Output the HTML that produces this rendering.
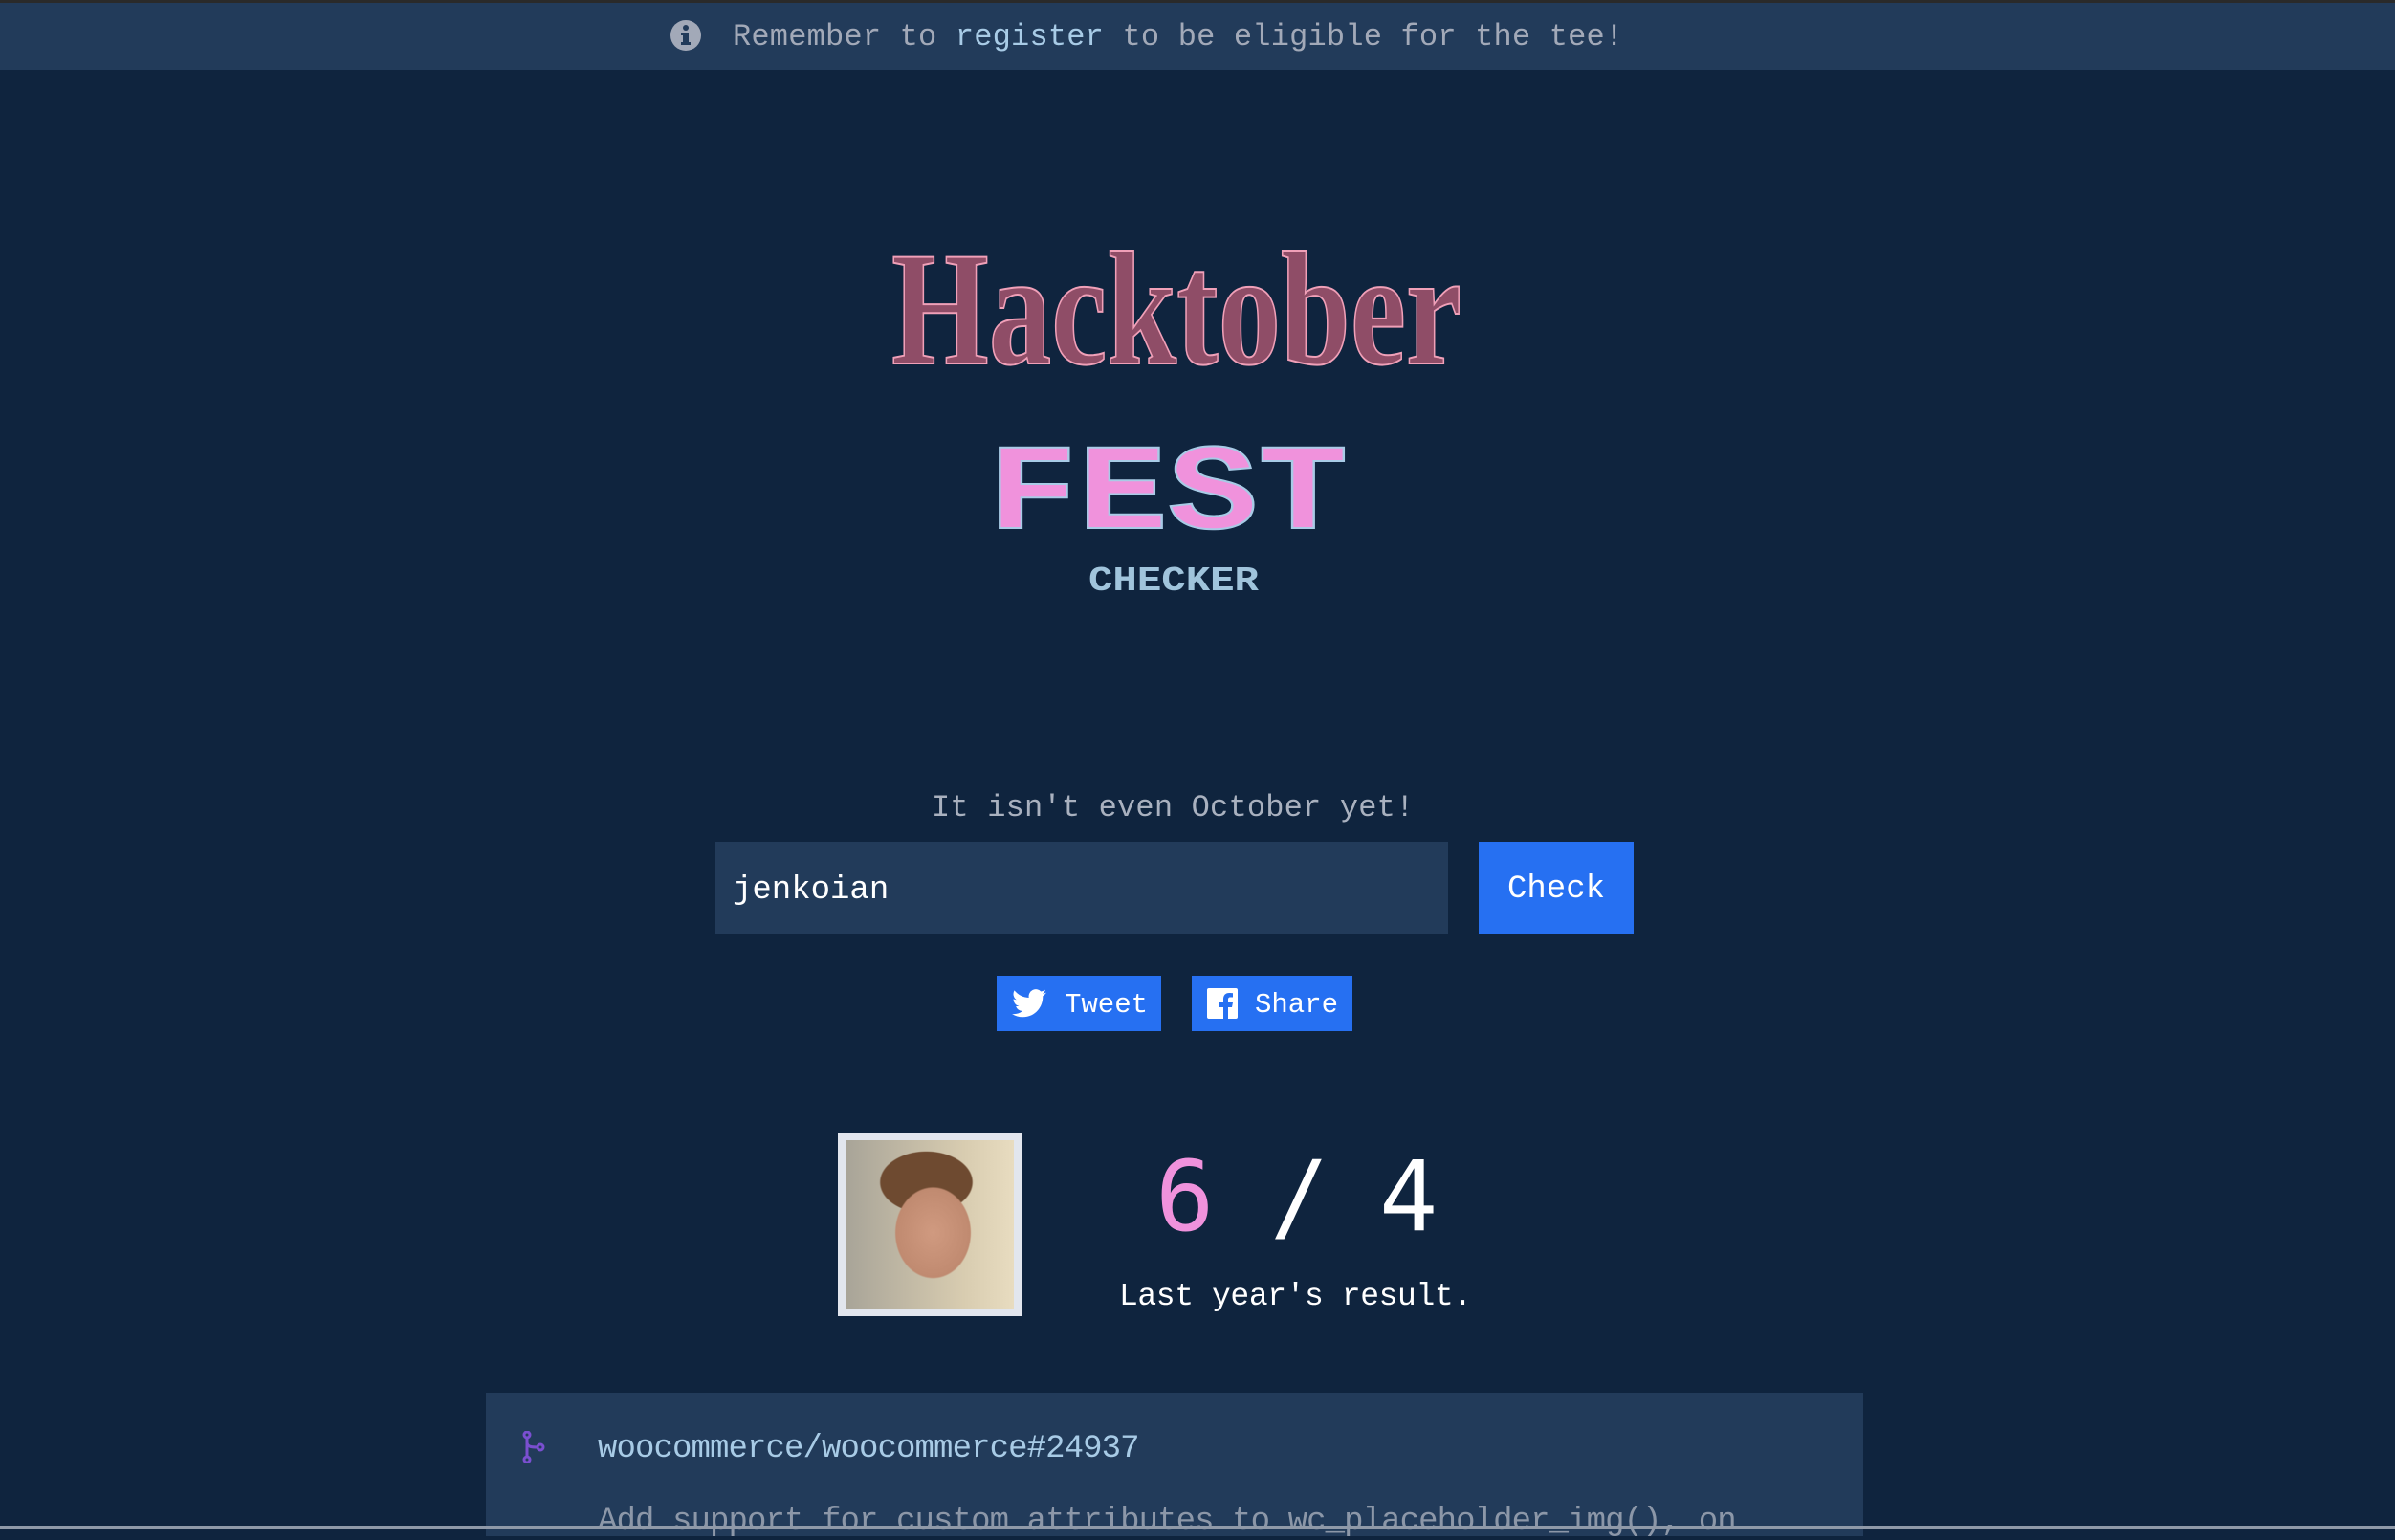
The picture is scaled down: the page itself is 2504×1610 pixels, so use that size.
<!DOCTYPE html>
<html><head><meta charset="utf-8"><style>
html,body{margin:0;padding:0}
body{width:2504px;height:1598px;background:#0f243e;position:relative;overflow:hidden;font-family:"Liberation Mono",monospace}
.abs{position:absolute}
.banner{left:0;top:0;width:2504px;height:73px;background:#223b5a;border-top:3px solid #2a2a2a;box-sizing:border-box}
.btxt{left:766px;top:20px;font-size:32px;color:#a2a9b8;white-space:pre;letter-spacing:0.2px}
.btxt b{font-weight:normal;color:#a8cbe6}
.q{left:974px;top:826px;font-size:32px;color:#a9b1bf;letter-spacing:0.2px;white-space:pre}
.inp{left:748px;top:880px;width:766px;height:96px;background:#223b5a}
.inp span{position:absolute;left:18px;top:32px;font-size:34px;color:#fff}
.chk{left:1546px;top:880px;width:162px;height:96px;background:#2670f2;color:#fff;font-size:34px;text-align:center;line-height:100px}
.sb{top:1020px;height:58px;background:#2670f2;color:#fff;font-size:29px;line-height:62px}
.av{left:876px;top:1184px;width:192px;height:192px;background:#e2e6ee}
.avi{left:8px;top:8px;width:176px;height:176px;background:radial-gradient(ellipse 40% 48% at 52% 55%,#d09a80 0%,#c08a70 55%,transparent 57%),radial-gradient(ellipse 45% 30% at 48% 25%,#6e4a30 0%,#6e4a30 60%,transparent 62%),linear-gradient(90deg,#a8a498,#d8ccb0 70%,#e8dcc0)}
.num{top:1192px;font-size:102px;font-family:"DejaVu Sans Mono","Liberation Mono",monospace}
.res{left:1170px;top:1337px;font-size:33px;color:#fff;letter-spacing:-0.4px;white-space:pre}
.card{left:508px;top:1456px;width:1440px;height:150px;background:#223b5a}
.repo{left:625px;top:1496px;font-size:34px;color:#a8cbe6;letter-spacing:-0.9px}
.desc{left:625px;top:1572px;font-size:34px;color:#8c97a8;letter-spacing:-0.9px;white-space:pre}
</style></head><body>
<div class="abs banner"></div>
<svg class="abs" style="left:700px;top:20px" width="34" height="34" viewBox="0 0 34 34"><circle cx="17" cy="17" r="16" fill="#a2a9b8"/><circle cx="17" cy="9" r="3" fill="#223b5a"/><rect x="14" y="14" width="6" height="13" fill="#223b5a"/><rect x="12" y="14" width="4" height="3" fill="#223b5a"/><rect x="12" y="24" width="10" height="3" fill="#223b5a"/></svg>
<div class="abs btxt">Remember to <b>register</b> to be eligible for the tee!</div>

<svg class="abs" style="left:900px;top:230px" width="700" height="400" viewBox="0 0 700 400">
<text x="330" y="150" text-anchor="middle" font-family="Liberation Serif,serif" font-weight="bold" font-size="170" textLength="596" lengthAdjust="spacingAndGlyphs" fill="#8f4d67" stroke="#f0a0b8" stroke-width="2">Hacktober</text>
<text x="321" y="322" text-anchor="middle" font-family="Liberation Mono,monospace" font-weight="bold" font-size="128" textLength="377" lengthAdjust="spacingAndGlyphs" fill="#f092dc" stroke="#a8cbe6" stroke-width="2">FEST</text>
<text x="327" y="387" text-anchor="middle" font-family="Liberation Mono,monospace" font-weight="bold" font-size="36" textLength="178" lengthAdjust="spacingAndGlyphs" fill="#a0c4dc">CHECKER</text>
</svg>

<div class="abs q">It isn't even October yet!</div>
<div class="abs inp"><span>jenkoian</span></div>
<div class="abs chk">Check</div>
<div class="abs sb" style="left:1042px;width:172px">
<svg style="position:absolute;left:16px;top:14px" width="36" height="30" viewBox="0 0 24 20"><path fill="#fff" d="M24 2.4a9.8 9.8 0 0 1-2.8.8A4.9 4.9 0 0 0 23.300.5a9.9 9.9 0 0 1-3.1 1.2A4.9 4.9 0 0 0 11.8 6 14 14 0 0 1 1.7.9a4.9 4.9 0 0 0 1.5 6.6 4.9 4.9 0 0 1-2.2-.6 4.9 4.9 0 0 0 3.900 4.9 4.9 4.9 0 0 1-2.2.1 4.9 4.9 0 0 0 4.6 3.4A9.9 9.9 0 0 1 0 17.3 14 14 0 0 0 7.5 19.5c9.1 0 14-7.5 14-14v-.6A10 10 0 0 0 24 2.4z"/></svg>
<span style="position:absolute;left:71px">Tweet</span></div>
<div class="abs sb" style="left:1246px;width:168px">
<svg style="position:absolute;left:16px;top:13px" width="32" height="32" viewBox="0 0 32 32"><rect width="32" height="32" rx="2" fill="#fff"/><path fill="#2670f2" d="M22 32V20h4l1-5h-5v-3c0-1.5.5-2.5 2.6-2.5H27V5.2c-.5 0-2-.2-3.8-.2-3.8 0-6.2 2.3-6.2 6.5V15h-4v5h4v12z"/></svg>
<span style="position:absolute;left:66px">Share</span></div>

<div class="abs av"><div class="abs avi"></div></div>
<div class="abs num" style="left:1208px;color:#f092dc">6</div>
<div class="abs num" style="left:1328px;color:#fff">/</div>
<div class="abs num" style="left:1442px;color:#fff">4</div>
<div class="abs res">Last year's result.</div>

<div class="abs card"></div>
<svg class="abs" style="left:546px;top:1496px" width="24" height="34" viewBox="0 0 24 34"><g fill="none" stroke="#7a4fd0" stroke-width="3"><circle cx="5" cy="4" r="3"/><circle cx="5" cy="30" r="3"/><circle cx="19" cy="17" r="3"/><path d="M5 7v20M5 12c0 5 6 5 11 5"/></g></svg>
<div class="abs repo">woocommerce/woocommerce#24937</div>
<div class="abs desc">Add support for custom attributes to wc_placeholder_img(), on</div>
<div class="abs" style="left:0;top:1595px;width:2504px;height:3px;background:#8f99a8"></div>
</body></html>
